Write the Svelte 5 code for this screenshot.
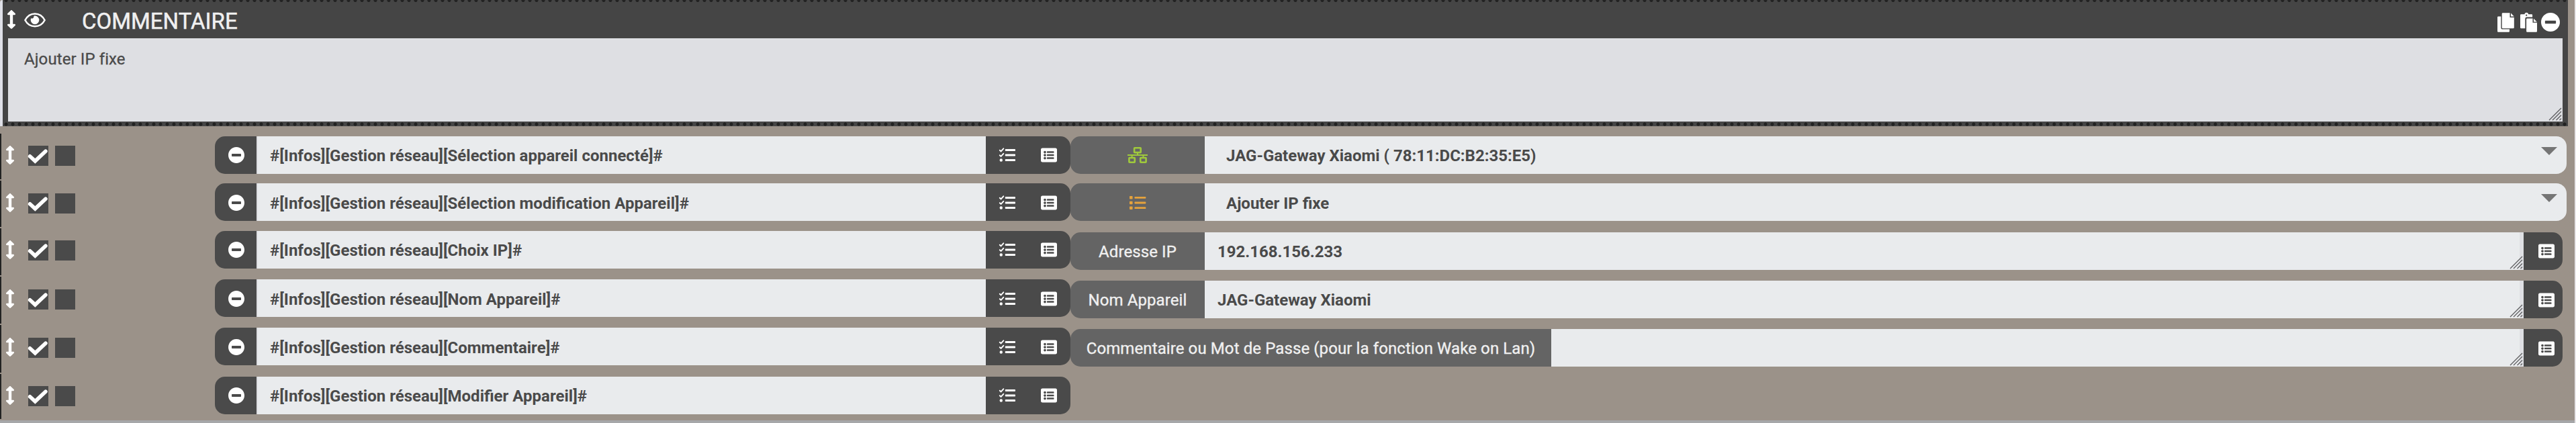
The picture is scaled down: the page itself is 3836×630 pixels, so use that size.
<script>
  const rows = [
    { cmd: '#[Infos][Gestion réseau][Sélection appareil connecté]#', kind: 'select', icon: 'network', value: 'JAG-Gateway Xiaomi ( 78:11:DC:B2:35:E5)', shift: 0 },
    { cmd: '#[Infos][Gestion réseau][Sélection modification Appareil]#', kind: 'select', icon: 'list', value: 'Ajouter IP fixe', shift: 1 },
    { cmd: '#[Infos][Gestion réseau][Choix IP]#', kind: 'message', label: 'Adresse IP', value: '192.168.156.233', shift: 0 },
    { cmd: '#[Infos][Gestion réseau][Nom Appareil]#', kind: 'message', label: 'Nom Appareil', value: 'JAG-Gateway Xiaomi', shift: 1 },
    { cmd: '#[Infos][Gestion réseau][Commentaire]#', kind: 'message', label: 'Commentaire ou Mot de Passe (pour la fonction Wake on Lan)', wide: true, value: '', shift: 1 },
    { cmd: '#[Infos][Gestion réseau][Modifier Appareil]#', kind: 'none', shift: 0 }
  ];
</script>

{#snippet arrows()}
  <svg class="arrows" viewBox="0 0 256 512"><path fill="#fff" d="M214.059 377.941H168V134.059h46.059c21.382 0 32.09-25.851 16.971-40.971L144.971 7.029c-9.373-9.373-24.568-9.373-33.941 0L24.971 93.088c-15.119 15.119-4.411 40.971 16.971 40.971H88v243.882H41.941c-21.382 0-32.09 25.851-16.971 40.971l86.059 86.059c9.373 9.373 24.568 9.373 33.941 0l86.059-86.059c15.12-15.119 4.412-40.971-16.97-40.971z" /></svg>
{/snippet}

{#snippet minus(size)}
  <svg width={size} height={size} viewBox="8 8 496 496"><path fill="#fff" d="M256 8C119 8 8 119 8 256s111 248 248 248 248-111 248-248S393 8 256 8zM124 296c-6.600 0-12-5.400-12-12v-56c0-6.600 5.400-12 12-12h264c6.600 0 12 5.400 12 12v56c0 6.600-5.400 12-12 12H124z" /></svg>
{/snippet}

{#snippet listAlt()}
  <svg width="24" height="24" viewBox="0 0 512 512"><path fill="#fff" d="M464 480H48c-26.510 0-48-21.490-48-48V80c0-26.510 21.490-48 48-48h416c26.510 0 48 21.490 48 48v352c0 26.510-21.490 48-48 48zM128 120c-22.091 0-40 17.909-40 40s17.909 40 40 40 40-17.909 40-40-17.909-40-40-40zm0 96c-22.091 0-40 17.909-40 40s17.909 40 40 40 40-17.909 40-40-17.909-40-40-40zm0 96c-22.091 0-40 17.909-40 40s17.909 40 40 40 40-17.909 40-40-17.909-40-40-40zm288-136v-32c0-6.627-5.373-12-12-12H204c-6.627 0-12 5.373-12 12v32c0 6.627 5.373 12 12 12h200c6.627 0 12-5.373 12-12zm0 96v-32c0-6.627-5.373-12-12-12H204c-6.627 0-12 5.373-12 12v32c0 6.627 5.373 12 12 12h200c6.627 0 12-5.373 12-12zm0 96v-32c0-6.627-5.373-12-12-12H204c-6.627 0-12 5.373-12 12v32c0 6.627 5.373 12 12 12h200c6.627 0 12-5.373 12-12z" /></svg>
{/snippet}

{#snippet tasks()}
  <svg width="24" height="24" viewBox="0 0 24 24">
    <path d="M.8 4.700 2.600 6.400 6.300 2.300M.8 12.200 2.600 13.900 6.300 9.800" fill="none" stroke="#fff" stroke-width="1.900" stroke-linecap="round" />
    <circle cx="2.800" cy="19.500" r="2.200" fill="#fff" />
    <path fill="#fff" d="M9.600 3.100h13.600q.8 0 .8.800v1.400q0 .8-.8.800H9.600q-.8 0-.8-.8V3.900q0-.8.8-.8zM9.600 10.600h13.600q.8 0 .8.800v1.400q0 .8-.8.800H9.600q-.8 0-.8-.8v-1.400q0-.8.8-.8zM9.600 18h13.600q.8 0 .8.800v1.400q0 .8-.8.800H9.600q-.8 0-.8-.8v-1.400q0-.8.8-.8z" />
  </svg>
{/snippet}

{#snippet grip()}
  <svg class="grip" width="20" height="20" viewBox="0 0 20 20"><path d="M1 19 19 1M6 19 19 6M11.500 19 19 11.500M16.500 19l2.500-2.500" fill="none" stroke="#5e5e60" stroke-width="1.300" /></svg>
{/snippet}

<div class="page">
  <section class="comment">
    <div class="head">
      {@render arrows()}
      <svg class="eye" width="32" height="22" viewBox="0 0 32 22">
        <path d="M1.400 11C4.500 5 10 1.400 16 1.400S27.500 5 30.600 11C27.500 17 22 20.200 16 20.200S4.500 17 1.400 11z" fill="none" stroke="#fff" stroke-width="2.500" />
        <path d="M16 4.600a6.300 6.300 0 1 1-6.300 6.300c0-1 .2-1.900.6-2.700a3 3 0 0 0 4.200-2.900c0-.2 0-.4-.1-.5.5-.1 1-.2 1.600-.2z" fill="#fff" />
      </svg>
      <span class="title">COMMENTAIRE</span>
      <div class="tools">
        <svg width="25" height="29" viewBox="0 0 25 29" fill="#fff">
          <path d="M1.300 5.500H5.300V22q0 2.600 2.600 2.600H18V27.500q0 1.300-1.300 1.300H1.300Q0 28.800 0 27.500V6.800Q0 5.500 1.300 5.500z" />
          <path d="M8 .3H18.500V7H24.800V22q0 1.300-1.300 1.300H8Q6.700 23.300 6.700 22V1.600Q6.700.3 8 .3zM20 .5l4.800 5H20z" />
        </svg>
        <svg class="paste" width="25" height="29" viewBox="0 0 25 29" fill="#fff">
          <path fill-rule="evenodd" d="M1.300 2.200H6.300Q7-.2 9.300-.2T12.200 2.200H17Q18.100 2.300 18.100 3.500V6.600H9.700Q7.300 6.600 7.300 9V23.300H1.300Q0 23.300 0 22V3.500Q0 2.200 1.300 2.200zM9.200 2.500a1.100 1.100 0 1 0 .01 0z" />
          <path d="M10.400 8.500H18.500V14.800H25V27.500q0 1.300-1.300 1.300H10.400Q9.100 28.800 9.100 27.500V9.800Q9.100 8.500 10.400 8.500zM20 8.700l4.800 4.700H20z" />
        </svg>
        {@render minus(28)}
      </div>
    </div>
    <div class="note">Ajouter IP fixe{@render grip()}</div>
    <div class="dots"></div>
  </section>

  <div class="rows">
    {#each rows as r}
      <div class="row" class:shift={r.shift}>
        {@render arrows()}
        <span class="box"><svg width="30" height="30" viewBox="0 0 30 30"><path d="M2.600 15.800 10.300 22.900 25.900 8.200" fill="none" stroke="#fff" stroke-width="5.600" stroke-linecap="round" /></svg></span>
        <span class="box second"></span>
        <div class="cmd">
          <span class="btn left">{@render minus(24)}</span>
          <span class="input">{r.cmd}</span>
          <span class="btn right">{@render tasks()}{@render listAlt()}</span>
        </div>
        {#if r.kind === 'select'}
          <div class="option">
            <span class="label">
              {#if r.icon === 'network'}
                <svg class="network" width="30" height="24" viewBox="0 0 30 24" fill="none" stroke="#9fc93c" stroke-width="2.600">
                  <rect x="10.100" y="1.300" width="9.600" height="6.800" rx=".7" />
                  <rect x="2.400" y="16" width="8.400" height="6.800" rx=".7" />
                  <rect x="19.200" y="16" width="8.400" height="6.800" rx=".7" />
                  <path stroke-width="2" d="M0 12H30M15 8v4M6.600 12v4M23.400 12v4" />
                </svg>
              {:else}
                <svg width="24" height="20" viewBox="0 0 24 20" fill="#e5a23c">
                  <rect x="0" y="0" width="4.600" height="4.600" rx=".8" /><rect x="0" y="7.700" width="4.600" height="4.600" rx=".8" /><rect x="0" y="15.400" width="4.600" height="4.600" rx=".8" />
                  <rect x="7.500" y=".9" width="16.800" height="2.800" rx=".6" /><rect x="7.500" y="8.600" width="16.800" height="2.800" rx=".6" /><rect x="7.500" y="16.300" width="16.800" height="2.800" rx=".6" />
                </svg>
              {/if}
            </span>
            <span class="select"><span class="val">{r.value}</span><svg class="caret" width="24" height="12" viewBox="0 0 24 12"><path d="M0 0H24L12 12z" fill="#757575" /></svg></span>
          </div>
        {:else if r.kind === 'message'}
          <div class="option message">
            <span class="label" class:wide={r.wide}>{r.label}</span>
            <span class="area">{r.value}{@render grip()}</span>
            <span class="btn end">{@render listAlt()}</span>
          </div>
        {/if}
      </div>
    {/each}
  </div>
</div>

<style>
  :global(body) { background: #e8e6e8; }
  * { box-sizing: border-box; }
  svg { display: block; flex: none; overflow: visible; }
  .page {
    width: 3834px; height: 630px; overflow: hidden;
    background: #9b9289; border-bottom: 4px solid #a6a7a9;
    font: 400 24px Roboto, sans-serif; color: #4a4a4a;
  }
  .comment {
    width: 3824px; height: 188px; background: #454545;
    border-left: 4px solid #dfe0e8; border-top-left-radius: 4px;
    display: flex; flex-direction: column;
  }
  .head {
    height: 57px; display: flex; align-items: flex-start; padding-left: 6px;
    background: radial-gradient(circle at 5px .5px, #222 2.200px, transparent 2.900px) 0 0 / 10px 5px repeat-x;
  }
  .head .arrows { margin-top: 15px; }
  .arrows { width: 14px; height: 28px; }
  .eye { margin: 19px 0 0 12px; }
  .title {
    margin-left: 54px; line-height: 57px; padding-top: 3px; height: 57px;
    font-size: 33px; color: #f0f0f0; white-space: nowrap;
    -webkit-text-stroke: .5px #f0f0f0;
  }
  .tools { margin: 19px 12px 0 auto; display: flex; }
  .paste { margin: 0 6px 0 9px; }
  .note {
    position: relative; margin: 0 8px; height: 124px; flex: none; padding: 17px 24px;
    background: #dedfe3; line-height: 28px; letter-spacing: .1px;
    -webkit-text-stroke: .3px #4a4a4a;
  }
  .grip { position: absolute; right: 1px; bottom: 1px; }
  .dots {
    height: 7px;
    background: radial-gradient(circle at 5px 4px, #222 2.200px, transparent 2.900px) 0 0 / 10px 7px repeat-x;
  }
  .rows { margin-top: 11px; display: grid; grid-template-rows: 70px 71px 72px 72px 73px 69px; }
  .row {
    display: flex; align-items: flex-start; padding: 4px 0 0 6px; margin-bottom: 2px;
    border-left: 2px solid #222; --o: 0px;
  }
  .row.shift { --o: 1px; }
  .row .arrows { margin: calc(13.500px + var(--o)) 0 0; }
  .box { width: 30px; height: 30px; margin: calc(14px + var(--o)) 0 0 20px; background: #4a4a4a; flex: none; }
  .box.second { margin-left: 10px; }
  .cmd { display: flex; width: 1274px; height: 56px; margin-left: 208px; flex: none; }
  .btn { background: #4a4a4a; display: flex; padding-top: calc(16px + var(--o)); height: 56px; flex: none; }
  .btn.left { width: 62px; padding-left: 20px; border-radius: 15px 0 0 15px; }
  .btn.right { width: 126px; padding-left: 20px; gap: 38px; border-radius: 0 15px 15px 0; }
  .input, .select, .area, .label {
    line-height: 56px; padding-top: calc(1px + var(--o)); height: 56px; white-space: pre; overflow: hidden;
  }
  .input, .select, .area { background: #e9ebed; font-weight: 700; }
  .input { flex: 1; padding-left: 18px; border-left: 2px solid #dedfe3; }
  .option { width: 2228px; display: flex; flex: none; }
  .option.message { width: 2222px; margin-top: 2px; --o: 0px; }
  .label {
    width: 200px; flex: none; display: flex; justify-content: center;
    background: #646464; color: #f0f0f0; border-radius: 15px 0 0 15px;
    letter-spacing: .1px; -webkit-text-stroke: .35px #f0f0f0;
  }
  .label svg { align-self: center; }
  .label .network { margin-top: -1px; }
  .label.wide { width: 716px; }
  .select { flex: 1; display: flex; justify-content: space-between; padding-left: 32px; padding-right: 14px; border-radius: 0 15px 15px 0; }
  .caret { margin-top: calc(15px - var(--o)); }
  .area { position: relative; flex: 1; padding-left: 19px; border-right: 6px solid #dfe0e4; overflow: visible; }
  .area .grip { right: -5px; }
  .btn.end { width: 58px; padding-left: 22px; border-radius: 0 15px 15px 0; }
  .row.shift .btn.end { padding-top: 17px; }
</style>
